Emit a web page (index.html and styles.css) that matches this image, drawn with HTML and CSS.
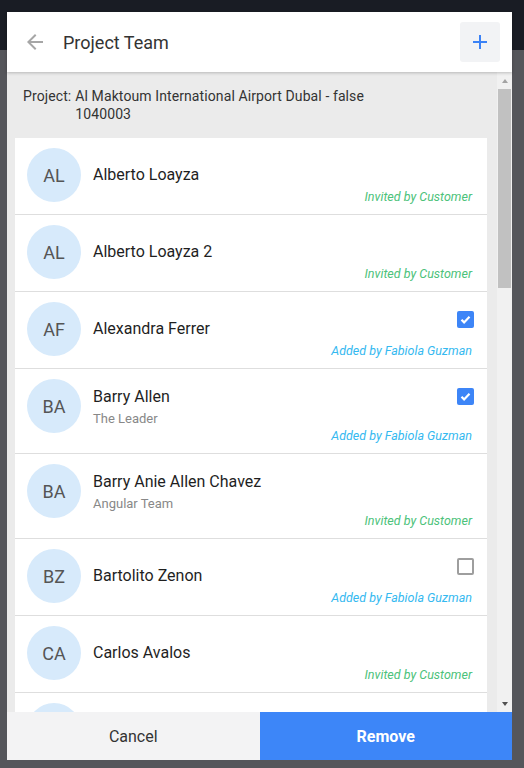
FILE: index.html
```html
<!DOCTYPE html>
<html>
<head>
<meta charset="utf-8">
<link rel="stylesheet" href="styles.css">
</head>
<body>
<div class="modal">
  <header class="modal-header">
    <button class="back" aria-label="Back">
      <svg width="24" height="24" viewBox="0 0 24 24"><path d="M20 11H7.83l5.59-5.59L12 4l-8 8 8 8 1.41-1.41L7.83 13H20v-2z" fill="#a6a6a6"/></svg>
    </button>
    <h1 class="title">Project Team</h1>
    <button class="add" aria-label="Add">
      <svg width="16" height="16" viewBox="0 0 16 16"><path d="M8 1v14M1 8h14" stroke="#3b82f6" stroke-width="2" fill="none"/></svg>
    </button>
  </header>
  <div class="modal-body">
    <div class="scroll-content">
      <div class="project">
        <span class="project-label">Project:</span>
        <div class="project-value">
          <div>Al Maktoum International Airport Dubal - false</div>
          <div>1040003</div>
        </div>
      </div>
      <ul class="people">
        <li class="person">
          <div class="avatar">AL</div>
          <div class="body">
            <div class="line"><div class="info"><div class="name">Alberto Loayza</div></div></div>
            <div class="label invited">Invited by Customer</div>
          </div>
        </li>
        <li class="person">
          <div class="avatar">AL</div>
          <div class="body">
            <div class="line"><div class="info"><div class="name">Alberto Loayza 2</div></div></div>
            <div class="label invited">Invited by Customer</div>
          </div>
        </li>
        <li class="person">
          <div class="avatar">AF</div>
          <div class="body">
            <div class="line"><div class="info"><div class="name">Alexandra Ferrer</div></div><span class="check checked"></span></div>
            <div class="label added">Added by Fabiola Guzman</div>
          </div>
        </li>
        <li class="person has-sub">
          <div class="avatar">BA</div>
          <div class="body">
            <div class="line"><div class="info"><div class="name">Barry Allen</div><div class="sub">The Leader</div></div><span class="check checked"></span></div>
            <div class="label added">Added by Fabiola Guzman</div>
          </div>
        </li>
        <li class="person has-sub">
          <div class="avatar">BA</div>
          <div class="body">
            <div class="line"><div class="info"><div class="name">Barry Anie Allen Chavez</div><div class="sub">Angular Team</div></div></div>
            <div class="label invited">Invited by Customer</div>
          </div>
        </li>
        <li class="person">
          <div class="avatar">BZ</div>
          <div class="body">
            <div class="line"><div class="info"><div class="name">Bartolito Zenon</div></div><span class="check"></span></div>
            <div class="label added">Added by Fabiola Guzman</div>
          </div>
        </li>
        <li class="person">
          <div class="avatar">CA</div>
          <div class="body">
            <div class="line"><div class="info"><div class="name">Carlos Avalos</div></div></div>
            <div class="label invited">Invited by Customer</div>
          </div>
        </li>
        <li class="person">
          <div class="avatar"></div>
          <div class="body"></div>
        </li>
      </ul>
    </div>
    <div class="scrollbar" aria-hidden="true">
      <div class="sb-btn"><span class="arrow-up"></span></div>
      <div class="thumb"></div>
      <div class="sb-track"></div>
      <div class="sb-btn"><span class="arrow-down"></span></div>
    </div>
  </div>
  <footer class="modal-footer">
    <button class="btn cancel">Cancel</button>
    <button class="btn remove">Remove</button>
  </footer>
</div>
</body>
</html>
```

FILE: styles.css
```css
* { box-sizing: border-box; }
html, body { margin: 0; height: 100%; }
body {
  padding: 12px 0 0 7px;
  background: linear-gradient(#191c24 0, #191c24 50px, #55565b 50px);
  font-family: Roboto, "Liberation Sans", sans-serif;
  color: #333;
  overflow: hidden;
}
.modal {
  width: 505px;
  height: 748px;
  background: #ebebeb;
  display: flex;
  flex-direction: column;
}
.modal-header {
  height: 60px;
  flex: none;
  background: #fff;
  display: flex;
  align-items: center;
  padding: 0 12px 0 16px;
  box-shadow: 0 1px 3px rgba(0,0,0,0.22);
  position: relative;
  z-index: 1;
}
.back {
  border: 0;
  background: none;
  padding: 0;
  width: 24px;
  height: 24px;
  display: flex;
}
.title {
  margin: 0 0 0 16px;
  font-size: 18px;
  font-weight: 400;
  color: #333;
  flex: 1;
}
.add {
  width: 40px;
  height: 40px;
  border: 0;
  border-radius: 3px;
  background: #f2f3f5;
  display: flex;
  align-items: center;
  justify-content: center;
  padding: 0;
}
.modal-body {
  flex: 1;
  min-height: 0;
  display: flex;
  background: #ebebeb;
}
.scroll-content {
  flex: 1;
  overflow: hidden;
}
.project {
  display: flex;
  gap: 4px;
  padding: 15px 16px 15px 16px;
  font-size: 14px;
  line-height: 18px;
  letter-spacing: 0.1px;
  color: #333;
}
.people {
  list-style: none;
  margin: 0 10px 0 8px;
  padding: 0;
  background: #fff;
}
.person {
  display: flex;
  align-items: flex-start;
  padding: 10px 13px 9px 12px;
  border-bottom: 1px solid #dedede;
}
.avatar {
  flex: none;
  width: 54px;
  height: 54px;
  margin-bottom: 3px;
  border-radius: 50%;
  background: #d7eafb;
  color: #555;
  font-size: 18px;
  display: flex;
  align-items: center;
  justify-content: center;
}
.body {
  flex: 1;
  margin-left: 12px;
  display: flex;
  flex-direction: column;
}
.line {
  display: flex;
  align-items: flex-start;
  justify-content: space-between;
}
.info { padding-top: 16px; }
.has-sub .info { padding-top: 7px; }
.name {
  font-size: 16px;
  line-height: 22px;
  color: #1f1f1f;
}
.sub {
  margin-top: 2px;
  font-size: 13px;
  line-height: 18px;
  color: #888;
}
.check {
  margin-top: 9px;
  width: 17px;
  height: 17px;
  border-radius: 2px;
  border: 2px solid #9e9e9e;
  display: block;
}
.check.checked {
  border: 0;
  background: #3d85f7 url("data:image/svg+xml;utf8,<svg xmlns='http://www.w3.org/2000/svg' width='17' height='17' viewBox='0 0 17 17'><path d='M4.5 8.8l2.6 2.6 5.4-5.6' stroke='white' stroke-width='2.2' fill='none'/></svg>") no-repeat center;
}
.label {
  margin-top: 3px;
  text-align: right;
  font-size: 12.5px;
  line-height: 16px;
  font-style: italic;
  padding-right: 2px;
}
.has-sub .label { margin-top: 0; }
.invited { color: #4cc27a; }
.added { color: #35b9f0; }
.scrollbar {
  flex: none;
  width: 15px;
  background: #f1f1f1;
  display: flex;
  flex-direction: column;
  align-items: center;
}
.sb-btn {
  height: 17px;
  width: 15px;
  flex: none;
  display: flex;
  align-items: center;
  justify-content: center;
}
.arrow-up {
  width: 0; height: 0;
  border-left: 3.5px solid transparent;
  border-right: 3.5px solid transparent;
  border-bottom: 4px solid #a3a3a3;
}
.arrow-down {
  width: 0; height: 0;
  border-left: 3.5px solid transparent;
  border-right: 3.5px solid transparent;
  border-top: 4px solid #505050;
}
.thumb {
  flex: none;
  width: 13px;
  height: 199px;
  background: #c1c1c1;
}
.sb-track { flex: 1; }
.modal-footer {
  flex: none;
  height: 48px;
  display: flex;
}
.btn {
  flex: 1;
  border: 0;
  font-family: Roboto, "Liberation Sans", sans-serif;
  font-size: 16px;
}
.cancel { background: #f3f3f4; color: #333; }
.remove { background: #3d86f8; color: #fff; font-weight: 700; }
```
